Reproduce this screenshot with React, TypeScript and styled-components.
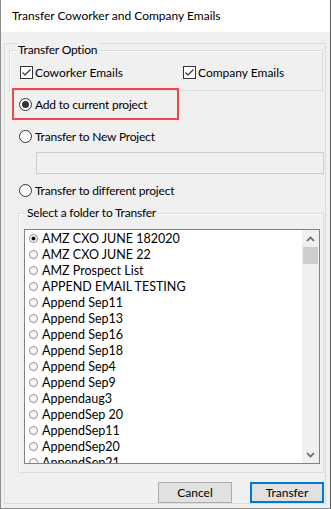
import React from "react";
import styled, { createGlobalStyle } from "styled-components";

const GlobalStyle = createGlobalStyle`
	html, body {
		margin: 0;
		padding: 0;
		background: #f0f0f0;
	}
	* {
		box-sizing: border-box;
	}
`;

const FONT = `"Segoe UI", Lato, "Noto Sans", sans-serif`;

const Window = styled.div`
	width: 331px;
	height: 509px;
	background: #f0f0f0;
	border-left: 1px solid #8c8c8c;
	border-right: 1px solid #5e5e5e;
	border-bottom: 1px solid #8c8c8c;
	font-family: ${FONT};
	font-size: 12px;
	color: #000;
	display: flex;
	flex-direction: column;
	overflow: hidden;
`;

const TitleBar = styled.div`
	height: 32px;
	flex: none;
	background: #fff;
	display: flex;
	align-items: center;
	padding-left: 11px;
	font-size: 12px;
	padding-bottom: 1px;
`;

const Panel = styled.div`
	margin: 11px 4px 0 3px;
	height: 461px;
	border: 1px solid #dcdcdc;
	display: flex;
	flex-direction: column;
`;

const GroupBox = styled.div<{ $left: number; $width: number; $top: number }>`
	position: relative;
	margin-left: ${(p) => p.$left}px;
	margin-top: ${(p) => p.$top}px;
	width: ${(p) => p.$width}px;
	border: 1px solid #dcdcdc;
	box-shadow: inset 1px 1px 0 #fff;
`;

const Legend = styled.span<{ $left: number }>`
	position: absolute;
	top: -9px;
	left: ${(p) => p.$left}px;
	padding: 0 1px;
	background: #f0f0f0;
	line-height: 16px;
	letter-spacing: -0.2px;
`;

const CheckRow = styled.div`
	display: flex;
	padding: 13px 0 9px 10px;
	height: 39px;
`;

const CheckItem = styled.label<{ $width: number }>`
	display: flex;
	align-items: center;
	gap: 2px;
	height: 16px;
	width: ${(p) => p.$width}px;
`;

const Highlight = styled.div`
	position: relative;
	margin: -3px 0 0 7px;
	width: 167px;
	height: 32px;
	border: 2px solid #f0474a;
	padding: 6px 0 6px 5px;
`;

const RadioRow = styled.label<{ $top?: number; $left?: number }>`
	display: flex;
	align-items: center;
	gap: 3px;
	height: 16px;
	margin-top: ${(p) => p.$top ?? 0}px;
	margin-left: ${(p) => p.$left ?? 0}px;
	letter-spacing: -0.2px;
`;

const TextBox = styled.div`
	margin: 8px 0 0 31px;
	width: 288px;
	height: 22px;
	flex: none;
	border: 1px solid #cccccc;
	background: #f0f0f0;
`;

const FolderBox = styled.div`
	padding: 15px 0 6px 5px;
	height: 258px;
`;

const ListBox = styled.div`
	width: 296px;
	height: 235px;
	border: 1px solid #828282;
	background: #fff;
	display: flex;
	overflow: hidden;
`;

const Items = styled.div`
	flex: 1;
	overflow: hidden;
`;

const Item = styled.div`
	display: flex;
	align-items: center;
	height: 16px;
	padding-left: 4px;
	gap: 4px;
	white-space: nowrap;
	font-size: 12.5px;
`;

const ScrollBar = styled.div`
	width: 17px;
	flex: none;
	background: #f0f0f0;
	display: flex;
	flex-direction: column;
	align-items: center;
`;

const ScrollArrow = styled.div`
	height: 17px;
	width: 17px;
	display: flex;
	align-items: center;
	justify-content: center;
`;

const Thumb = styled.div`
	width: 15px;
	height: 17px;
	background: #cdcdcd;
`;

const Spacer = styled.div`
	flex: 1;
`;

const ButtonRow = styled.div`
	display: flex;
	justify-content: flex-end;
	gap: 18px;
	margin: 9px 1px 0 0;
`;

const Button = styled.button<{ $default?: boolean }>`
	width: 74px;
	height: 21px;
	font-family: ${FONT};
	font-size: 12px;
	color: #000;
	background: #e1e1e1;
	border: ${(p) => (p.$default ? "2px solid #0078d7" : "1px solid #adadad")};
	padding: 0;
	line-height: 1;
`;

const CheckBoxIcon = () => (
	<svg width="13" height="13" viewBox="0 0 13 13">
		<rect x="0.5" y="0.5" width="12" height="12" fill="#fff" stroke="#333" />
		<path d="M2.5 6.5 L5 9 L10.5 3.5" fill="none" stroke="#333" strokeWidth="1.2" />
	</svg>
);

const RadioIcon = ({ checked }: { checked?: boolean }) => (
	<svg width="13" height="13" viewBox="0 0 13 13">
		<circle cx="6.5" cy="6.5" r="6" fill="#fff" stroke="#333" />
		{checked && <circle cx="6.5" cy="6.5" r="3.5" fill="#333" />}
	</svg>
);

const SmallRadio = ({ checked }: { checked?: boolean }) => (
	<svg width="9" height="9" viewBox="0 0 9 9">
		<circle cx="4.5" cy="4.5" r="4" fill="#fff" stroke="#8a8a8a" />
		{checked && <circle cx="4.5" cy="4.5" r="2" fill="#111" />}
	</svg>
);

const Chevron = ({ up }: { up?: boolean }) => (
	<svg width="9" height="6" viewBox="0 0 9 6">
		<path d={up ? "M1 5 L4.5 1.5 L8 5" : "M1 1 L4.5 4.5 L8 1"} fill="none" stroke="#606060" strokeWidth="1.6" />
	</svg>
);

const folders = [
	"AMZ CXO JUNE 182020",
	"AMZ CXO JUNE 22",
	"AMZ Prospect List",
	"APPEND EMAIL TESTING",
	"Append Sep11",
	"Append Sep13",
	"Append Sep16",
	"Append Sep18",
	"Append Sep4",
	"Append Sep9",
	"Appendaug3",
	"AppendSep 20",
	"AppendSep11",
	"AppendSep20",
	"AppendSep21",
];

const App = (): JSX.Element => {
	return (
		<>
			<GlobalStyle />
			<Window>
				<TitleBar>Transfer Coworker and Company Emails</TitleBar>
				<Panel>
					<GroupBox $left={4} $width={314} $top={6}>
						<Legend $left={7}>Transfer Option</Legend>
						<CheckRow>
							<CheckItem $width={163}>
								<CheckBoxIcon />
								Coworker Emails
							</CheckItem>
							<CheckItem $width={120}>
								<CheckBoxIcon />
								Company Emails
							</CheckItem>
						</CheckRow>
					</GroupBox>
					<Highlight>
						<RadioRow>
							<RadioIcon checked />
							Add to current project
						</RadioRow>
					</Highlight>
					<RadioRow $top={9} $left={14}>
						<RadioIcon />
						Transfer to New Project
					</RadioRow>
					<TextBox />
					<RadioRow $top={9} $left={14}>
						<RadioIcon />
						Transfer to different project
					</RadioRow>
					<GroupBox $left={13} $width={306} $top={15}>
						<Legend $left={7}>Select a folder to Transfer</Legend>
						<FolderBox>
							<ListBox>
								<Items>
									{folders.map((name, i) => (
										<Item key={name}>
											<SmallRadio checked={i === 0} />
											{name}
										</Item>
									))}
								</Items>
								<ScrollBar>
									<ScrollArrow>
										<Chevron up />
									</ScrollArrow>
									<Thumb />
									<Spacer />
									<ScrollArrow>
										<Chevron />
									</ScrollArrow>
								</ScrollBar>
							</ListBox>
						</FolderBox>
					</GroupBox>
					<ButtonRow>
						<Button>Cancel</Button>
						<Button $default>Transfer</Button>
					</ButtonRow>
				</Panel>
			</Window>
		</>
	);
};

export default App;
